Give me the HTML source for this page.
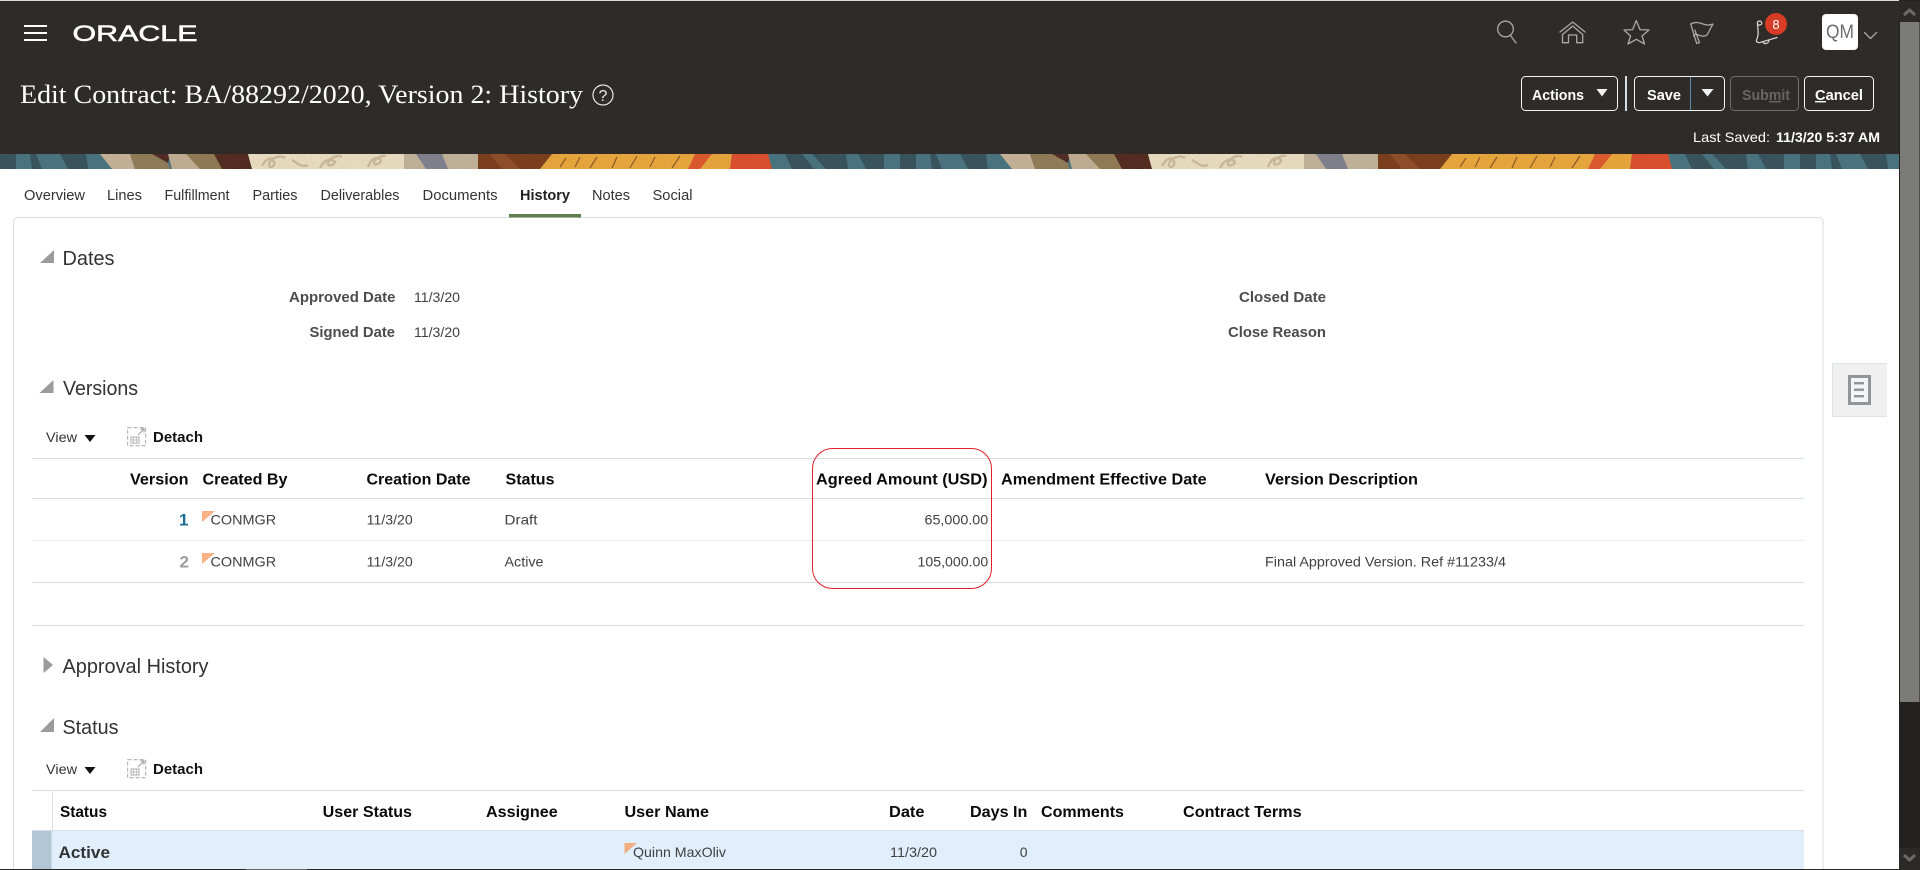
<!DOCTYPE html>
<html><head><meta charset="utf-8"><title>Edit Contract: History</title>
<style>
html,body{margin:0;padding:0;width:1920px;height:870px;overflow:hidden;background:#fff}
svg{display:block;position:absolute;left:0;top:0}
text{font-family:"Liberation Sans",Arial,sans-serif;font-size:14px;fill:#333}
.tab{font-size:15px;fill:#333}
.sec{font-size:20px;fill:#333}
.lbl{font-size:14.5px;font-weight:bold;fill:#4c4c4c}
.val{font-size:14px;fill:#404040}
.th{font-size:15.5px;font-weight:bold;fill:#0a0a0a}
.td{font-size:14px;fill:#404040}
.btn{font-size:14.5px;font-weight:bold;fill:#fff}
.ic{fill:none;stroke:#a9a9a7;stroke-width:1.3;stroke-linejoin:round;stroke-linecap:round}
</style></head><body>
<svg width="1920" height="870" viewBox="0 0 1920 870" xmlns="http://www.w3.org/2000/svg">
<defs>
<pattern id="band" x="0" y="154" width="900" height="15" patternUnits="userSpaceOnUse">
<rect width="900" height="15" fill="#47727f"/>
<polygon points="0,0 16,0 16,15 0,15" fill="#36525d"/>
<polygon points="30,0 36,0 42,15 32,15" fill="#36525d"/>
<polygon points="60,0 86,0 88,15 68,15" fill="#36525d"/>
<polygon points="100,0 130,0 135,15 112,15" fill="#c4b298"/>
<polygon points="130,0 165,0 170,15 135,15" fill="#8f7b57"/>
<polygon points="152,0 170,0 168,9" fill="#4f2a25"/>
<polygon points="168,0 214,0 222,15 172,15" fill="#bfae92"/>
<polygon points="186,0 214,0 222,15 200,15" fill="#8f7a53"/>
<polygon points="214,0 248,0 252,15 222,15" fill="#52291f"/>
<polygon points="248,0 404,0 404,15 252,15" fill="#e9ddc2"/>
<path d="M262 12c5-9 10-9 12-4s-6 7-5 2 10-10 16-6M292 6c6 3 10 8 16 5M320 14c4-8 10-10 14-7s-8 7-6 2 10-9 14-6M368 13c3-8 8-11 12-8s-6 8-6 4 7-8 12-7" fill="none" stroke="#cbb99c" stroke-width="2.4"/>
<polygon points="404,0 480,0 480,15 404,15" fill="#c2b199"/>
<polygon points="416,0 442,0 448,15 426,15" fill="#7f808e"/>
<polygon points="478,0 552,0 540,15 478,15" fill="#7a3d1b"/>
<polygon points="490,0 505,0 520,15 502,15" fill="#8f4c28"/>
<polygon points="552,0 695,0 690,15 540,15" fill="#e9a63b"/>
<path d="M560 13l6-9M575 13l5-10M590 14l7-11M612 14l5-11M630 14l7-12M650 13l5-10M672 14l8-12" fill="none" stroke="#8b5a25" stroke-width="1.2"/>
<polygon points="695,0 732,0 728,15 688,15" fill="#dd582c"/>
<polygon points="712,0 732,0 730,15 700,15" fill="#e9a53a"/>
<polygon points="732,0 768,0 772,15 730,15" fill="#dc4d2c"/>
<polygon points="772,0 900,0 900,15 772,15" fill="#47727f"/>
<polygon points="785,0 802,0 814,15 792,15" fill="#36525d"/>
<polygon points="812,0 846,0 848,15 826,15" fill="#36525d"/>
<polygon points="858,0 884,0 884,15 866,15" fill="#36525d"/>
</pattern>
<filter id="grain" x="0" y="0" width="100%" height="100%">
<feTurbulence type="fractalNoise" baseFrequency="0.9" numOctaves="2" seed="3"/>
<feColorMatrix values="0 0 0 0 0.2  0 0 0 0 0.15  0 0 0 0 0.1  0 0 0 1.2 -0.55"/>
</filter>
</defs>

<!-- header -->
<rect width="1920" height="870" fill="#fff"/>
<rect x="0" y="1" width="1920" height="153" fill="#2f2b28"/>
<rect x="0" y="0" width="1920" height="1" fill="#d9d9d9"/>
<rect x="0" y="154" width="1900" height="15" fill="url(#band)"/>
<rect x="0" y="154" width="1900" height="15" filter="url(#grain)" opacity=".45"/>

<g fill="#fff">
<rect x="24" y="25" width="23" height="2"/><rect x="24" y="32" width="23" height="2"/><rect x="24" y="39" width="23" height="2"/>
</g>
<text x="72.5" y="41" textLength="125" lengthAdjust="spacingAndGlyphs" style="font-size:22px;fill:#fff;stroke:#fff;stroke-width:.55">ORACLE</text>

<text x="20" y="103" textLength="563" lengthAdjust="spacingAndGlyphs" style="font-family:'Liberation Serif',serif;font-size:26px;fill:#fff">Edit Contract: BA/88292/2020, Version 2: History</text>
<circle cx="603" cy="95" r="10" fill="none" stroke="#e8e8e8" stroke-width="1.2"/>
<text x="603" y="101" text-anchor="middle" style="font-size:16px;fill:#eee">?</text>

<!-- global icons -->
<circle cx="1505.5" cy="29" r="7.8" class="ic"/><path class="ic" d="M1510.5 35.5L1516 43"/>
<path class="ic" d="M1560 32L1572.7 22L1585 32M1562.5 34.5L1572.7 26L1582.7 34.5M1562.5 34.5V42.7H1568.5V35H1576.7V42.7H1582.7V34.5"/>
<path class="ic" d="M1636.3 20.5L1640 29.6L1649 30L1642 36L1644.6 44L1636.3 39.3L1628 44L1630.6 36L1624 30L1632.6 29.6Z"/>
<path class="ic" d="M1690.7 24L1696.7 43.5L1699.5 42.5L1694.8 30M1690.7 24C1700 19 1704 28 1713 24L1707 35C1701 39 1696 31 1693.5 36"/>
<path class="ic" style="stroke:#d0d0ce" d="M1758 21.5C1761 20 1763 23 1761 24.5C1759 26 1756 24 1758 21.5ZM1757.5 25C1758 31 1759 35 1756.5 40C1756 42 1758 43 1760 42.5L1777 37.5M1763 42C1764 44.5 1768 44 1769 40.5"/>
<circle cx="1776" cy="24" r="11" fill="#d63c26"/>
<text x="1776" y="29" text-anchor="middle" style="font-size:13px;fill:#fff">8</text>
<rect x="1822" y="14" width="36" height="36" rx="4" fill="#fff"/>
<text x="1840" y="38" text-anchor="middle" textLength="28" lengthAdjust="spacingAndGlyphs" style="font-size:19px;fill:#6d6d6d">QM</text>
<path class="ic" d="M1864.5 32.5L1870.5 38.5L1876.5 32.5"/>

<!-- action buttons -->
<g fill="none" stroke="#f3f3f3" stroke-width="1">
<rect x="1521.5" y="76.5" width="96" height="34" rx="4"/>
<rect x="1634.5" y="76.5" width="90" height="34" rx="4"/>
<rect x="1804.5" y="76.5" width="69" height="34" rx="4"/>
</g>
<rect x="1730.5" y="76.5" width="68" height="34" rx="4" fill="none" stroke="#6f6e6b"/>
<rect x="1625" y="76" width="2" height="35" fill="#d5dde3"/>
<rect x="1690" y="77" width="1" height="33" fill="#5b8db0"/>
<polygon points="1596.5,89 1607.5,89 1602,96.5" fill="#f2f2f2"/>
<polygon points="1701.5,89 1713.5,89 1707.5,96.5" fill="#f2f2f2"/>
<text class="btn" x="1532" y="100" textLength="52" lengthAdjust="spacingAndGlyphs">Actions</text>
<text class="btn" x="1647" y="100" textLength="34" lengthAdjust="spacingAndGlyphs">Save</text>
<text class="btn" x="1742" y="100" textLength="48" lengthAdjust="spacingAndGlyphs" style="fill:#666">Submit</text>
<rect x="1769" y="101" width="12" height="1.4" fill="#666"/>
<text class="btn" x="1815" y="100" textLength="48" lengthAdjust="spacingAndGlyphs">Cancel</text>
<rect x="1815" y="101" width="11" height="1.4" fill="#fff"/>
<text x="1693" y="142" textLength="77" lengthAdjust="spacingAndGlyphs" style="fill:#fff">Last Saved:</text>
<text x="1776" y="142" textLength="104" lengthAdjust="spacingAndGlyphs" style="fill:#fff;font-weight:bold">11/3/20 5:37 AM</text>

<!-- tabs -->
<text class="tab" x="24" y="200" textLength="61" lengthAdjust="spacingAndGlyphs">Overview</text>
<text class="tab" x="107" y="200" textLength="35" lengthAdjust="spacingAndGlyphs">Lines</text>
<text class="tab" x="164.5" y="200" textLength="65" lengthAdjust="spacingAndGlyphs">Fulfillment</text>
<text class="tab" x="252.5" y="200" textLength="45" lengthAdjust="spacingAndGlyphs">Parties</text>
<text class="tab" x="320.5" y="200" textLength="79" lengthAdjust="spacingAndGlyphs">Deliverables</text>
<text class="tab" x="422.5" y="200" textLength="75" lengthAdjust="spacingAndGlyphs">Documents</text>
<text class="tab" x="520" y="200" textLength="50" lengthAdjust="spacingAndGlyphs" style="font-weight:bold;fill:#222">History</text>
<text class="tab" x="592" y="200" textLength="38" lengthAdjust="spacingAndGlyphs">Notes</text>
<text class="tab" x="652.5" y="200" textLength="40" lengthAdjust="spacingAndGlyphs">Social</text>

<!-- card -->
<rect x="13.5" y="217.5" width="1809.5" height="670" rx="4" fill="#fff" stroke="#d6dfe6"/>
<rect x="509" y="214" width="72" height="3.5" fill="#5f7d4f"/>

<!-- side button -->
<path d="M1887 363.5H1832.5V416.5H1887" fill="#f0f0f0" stroke="#dfe4ea"/>
<rect x="1849.5" y="376.5" width="20" height="27" fill="#f4f5f6" stroke="#8e959b" stroke-width="3"/>
<g fill="#8e959b"><rect x="1854" y="382" width="10" height="2.4"/><rect x="1854" y="388.5" width="10" height="2.4"/><rect x="1854" y="395" width="10" height="2.4"/></g>

<!-- Dates -->
<polygon points="40,263 54,263 54,250" fill="#9b9b9b"/>
<text class="sec" x="62.5" y="265" textLength="52" lengthAdjust="spacingAndGlyphs">Dates</text>
<text class="lbl" x="289" y="302" textLength="106.5" lengthAdjust="spacingAndGlyphs">Approved Date</text>
<text class="val" x="414" y="302" textLength="46" lengthAdjust="spacingAndGlyphs">11/3/20</text>
<text class="lbl" x="309.5" y="337" textLength="85.5" lengthAdjust="spacingAndGlyphs">Signed Date</text>
<text class="val" x="414" y="337" textLength="46" lengthAdjust="spacingAndGlyphs">11/3/20</text>
<text class="lbl" x="1239" y="302" textLength="87" lengthAdjust="spacingAndGlyphs">Closed Date</text>
<text class="lbl" x="1228" y="337" textLength="98" lengthAdjust="spacingAndGlyphs">Close Reason</text>

<!-- Versions -->
<polygon points="39.5,393 53.5,393 53.5,380" fill="#9b9b9b"/>
<text class="sec" x="63" y="395" textLength="75" lengthAdjust="spacingAndGlyphs">Versions</text>
<text x="46" y="442" textLength="31" lengthAdjust="spacingAndGlyphs">View</text>
<polygon points="84.5,435 95.5,435 90,442" fill="#111"/>
<g fill="none" stroke="#b8b8b8" stroke-width="1.2">
<rect x="127.6" y="427.6" width="18" height="18" stroke-dasharray="4 2"/>
<path d="M138 435L144 429M140.5 429H144V432.5" stroke="#a5a5a5"/>
<rect x="131" y="437" width="8" height="6" stroke="#adadad" stroke-width="1"/><path d="M131 440H139M133.7 437V443M136.3 437V443" stroke="#adadad" stroke-width=".7"/>
</g>
<text x="153" y="442" textLength="50" lengthAdjust="spacingAndGlyphs" style="font-weight:bold;font-size:14.5px;fill:#111">Detach</text>

<rect x="32" y="458" width="1772" height="1" fill="#d6dfe6"/>
<rect x="32" y="498" width="1772" height="1" fill="#d6dfe6"/>
<rect x="32" y="540" width="1772" height="1" fill="#e8ecf0"/>
<rect x="32" y="582" width="1772" height="1" fill="#d6dfe6"/>
<rect x="32" y="625" width="1772" height="1" fill="#d6dfe6"/>

<text class="th" x="130" y="484.5" textLength="58.5" lengthAdjust="spacingAndGlyphs">Version</text>
<text class="th" x="202.5" y="484.5" textLength="85" lengthAdjust="spacingAndGlyphs">Created By</text>
<text class="th" x="366.5" y="484.5" textLength="104" lengthAdjust="spacingAndGlyphs">Creation Date</text>
<text class="th" x="505.5" y="484.5" textLength="49" lengthAdjust="spacingAndGlyphs">Status</text>
<text class="th" x="816" y="484.5" textLength="171.5" lengthAdjust="spacingAndGlyphs">Agreed Amount (USD)</text>
<text class="th" x="1001" y="484.5" textLength="205.7" lengthAdjust="spacingAndGlyphs">Amendment Effective Date</text>
<text class="th" x="1265" y="484.5" textLength="153" lengthAdjust="spacingAndGlyphs">Version Description</text>

<text x="188.5" y="525.5" text-anchor="end" style="font-size:17px;font-weight:bold;fill:#1b6c94">1</text>
<polygon points="202,511 215,511 202,522" fill="#fbb184"/>
<text class="td" x="210.5" y="524.5" textLength="65.7" lengthAdjust="spacingAndGlyphs">CONMGR</text>
<text class="td" x="366.7" y="524.5" textLength="46" lengthAdjust="spacingAndGlyphs">11/3/20</text>
<text class="td" x="504.5" y="524.5" textLength="33" lengthAdjust="spacingAndGlyphs">Draft</text>
<text class="td" x="924.5" y="524.5" textLength="63.7" lengthAdjust="spacingAndGlyphs">65,000.00</text>

<text x="189" y="567.5" text-anchor="end" style="font-size:17px;font-weight:bold;fill:#9c9c9c">2</text>
<polygon points="202,553 215,553 202,564" fill="#fbb184"/>
<text class="td" x="210.5" y="566.5" textLength="65.7" lengthAdjust="spacingAndGlyphs">CONMGR</text>
<text class="td" x="366.7" y="566.5" textLength="46" lengthAdjust="spacingAndGlyphs">11/3/20</text>
<text class="td" x="504.5" y="566.5" textLength="39" lengthAdjust="spacingAndGlyphs">Active</text>
<text class="td" x="917.5" y="566.5" textLength="70.7" lengthAdjust="spacingAndGlyphs">105,000.00</text>
<text class="td" x="1265" y="566.5" textLength="241" lengthAdjust="spacingAndGlyphs">Final Approved Version. Ref #11233/4</text>

<rect x="812.5" y="448.5" width="179" height="140" rx="20" fill="none" stroke="#e3202c" stroke-width="1"/>

<!-- Approval History -->
<polygon points="43.5,657 53,665 43.5,673" fill="#9b9b9b"/>
<text class="sec" x="62.5" y="673" textLength="146" lengthAdjust="spacingAndGlyphs">Approval History</text>

<!-- Status -->
<polygon points="40,732 54,732 54,718" fill="#9b9b9b"/>
<text class="sec" x="62.5" y="734" textLength="56" lengthAdjust="spacingAndGlyphs">Status</text>
<text x="46" y="774" textLength="31" lengthAdjust="spacingAndGlyphs">View</text>
<polygon points="84.5,767 95.5,767 90,774" fill="#111"/>
<g fill="none" stroke="#b8b8b8" stroke-width="1.2">
<rect x="127.6" y="759.6" width="18" height="18" stroke-dasharray="4 2"/>
<path d="M138 767L144 761M140.5 761H144V764.5" stroke="#a5a5a5"/>
<rect x="131" y="769" width="8" height="6" stroke="#adadad" stroke-width="1"/><path d="M131 772H139M133.7 769V775M136.3 769V775" stroke="#adadad" stroke-width=".7"/>
</g>
<text x="153" y="774" textLength="50" lengthAdjust="spacingAndGlyphs" style="font-weight:bold;font-size:14.5px;fill:#111">Detach</text>

<rect x="32" y="790" width="1772" height="1" fill="#d6dfe6"/>
<rect x="52" y="790" width="1" height="40" fill="#dde3e9"/>
<rect x="32" y="830" width="1772" height="1" fill="#d6dfe6"/>
<rect x="32" y="831" width="1772" height="38" fill="#e1effc"/>
<rect x="32" y="831" width="19.5" height="38" fill="#b2c6d6"/>
<text class="th" x="60" y="817" textLength="47" lengthAdjust="spacingAndGlyphs">Status</text>
<text class="th" x="322.7" y="817" textLength="89.3" lengthAdjust="spacingAndGlyphs">User Status</text>
<text class="th" x="486" y="817" textLength="71.7" lengthAdjust="spacingAndGlyphs">Assignee</text>
<text class="th" x="624.5" y="817" textLength="84.5" lengthAdjust="spacingAndGlyphs">User Name</text>
<text class="th" x="889" y="817" textLength="35.5" lengthAdjust="spacingAndGlyphs">Date</text>
<text class="th" x="970" y="817" textLength="57.4" lengthAdjust="spacingAndGlyphs">Days In</text>
<text class="th" x="1041" y="817" textLength="83" lengthAdjust="spacingAndGlyphs">Comments</text>
<text class="th" x="1183" y="817" textLength="118.6" lengthAdjust="spacingAndGlyphs">Contract Terms</text>
<text x="58.5" y="858" textLength="51.5" lengthAdjust="spacingAndGlyphs" style="font-size:17px;font-weight:bold;fill:#333">Active</text>
<polygon points="624.5,843 637,843 624.5,854" fill="#f0ad82"/>
<text class="td" x="633" y="857" textLength="93" lengthAdjust="spacingAndGlyphs">Quinn MaxOliv</text>
<text class="td" x="890" y="857" textLength="47" lengthAdjust="spacingAndGlyphs">11/3/20</text>
<text class="td" x="1027.5" y="857" text-anchor="end">0</text>

<!-- scrollbars -->
<rect x="1899" y="0" width="21" height="870" fill="#232220"/>
<rect x="1900" y="22" width="19.5" height="680" fill="#7b7b78"/>
<rect x="1899" y="1" width="21" height="21" fill="#2b2a28"/>
<path d="M1904 15L1909.5 10L1915 15" fill="none" stroke="#6a6a68" stroke-width="3"/>
<rect x="1899" y="848" width="21" height="21" fill="#2b2a28"/>
<path d="M1904 855L1909.5 860L1915 855" fill="none" stroke="#6a6a68" stroke-width="3"/>
<rect x="0" y="869" width="1920" height="1" fill="#2a2926"/>
<rect x="246" y="869" width="61" height="1" fill="#666"/>
</svg>
</body></html>
